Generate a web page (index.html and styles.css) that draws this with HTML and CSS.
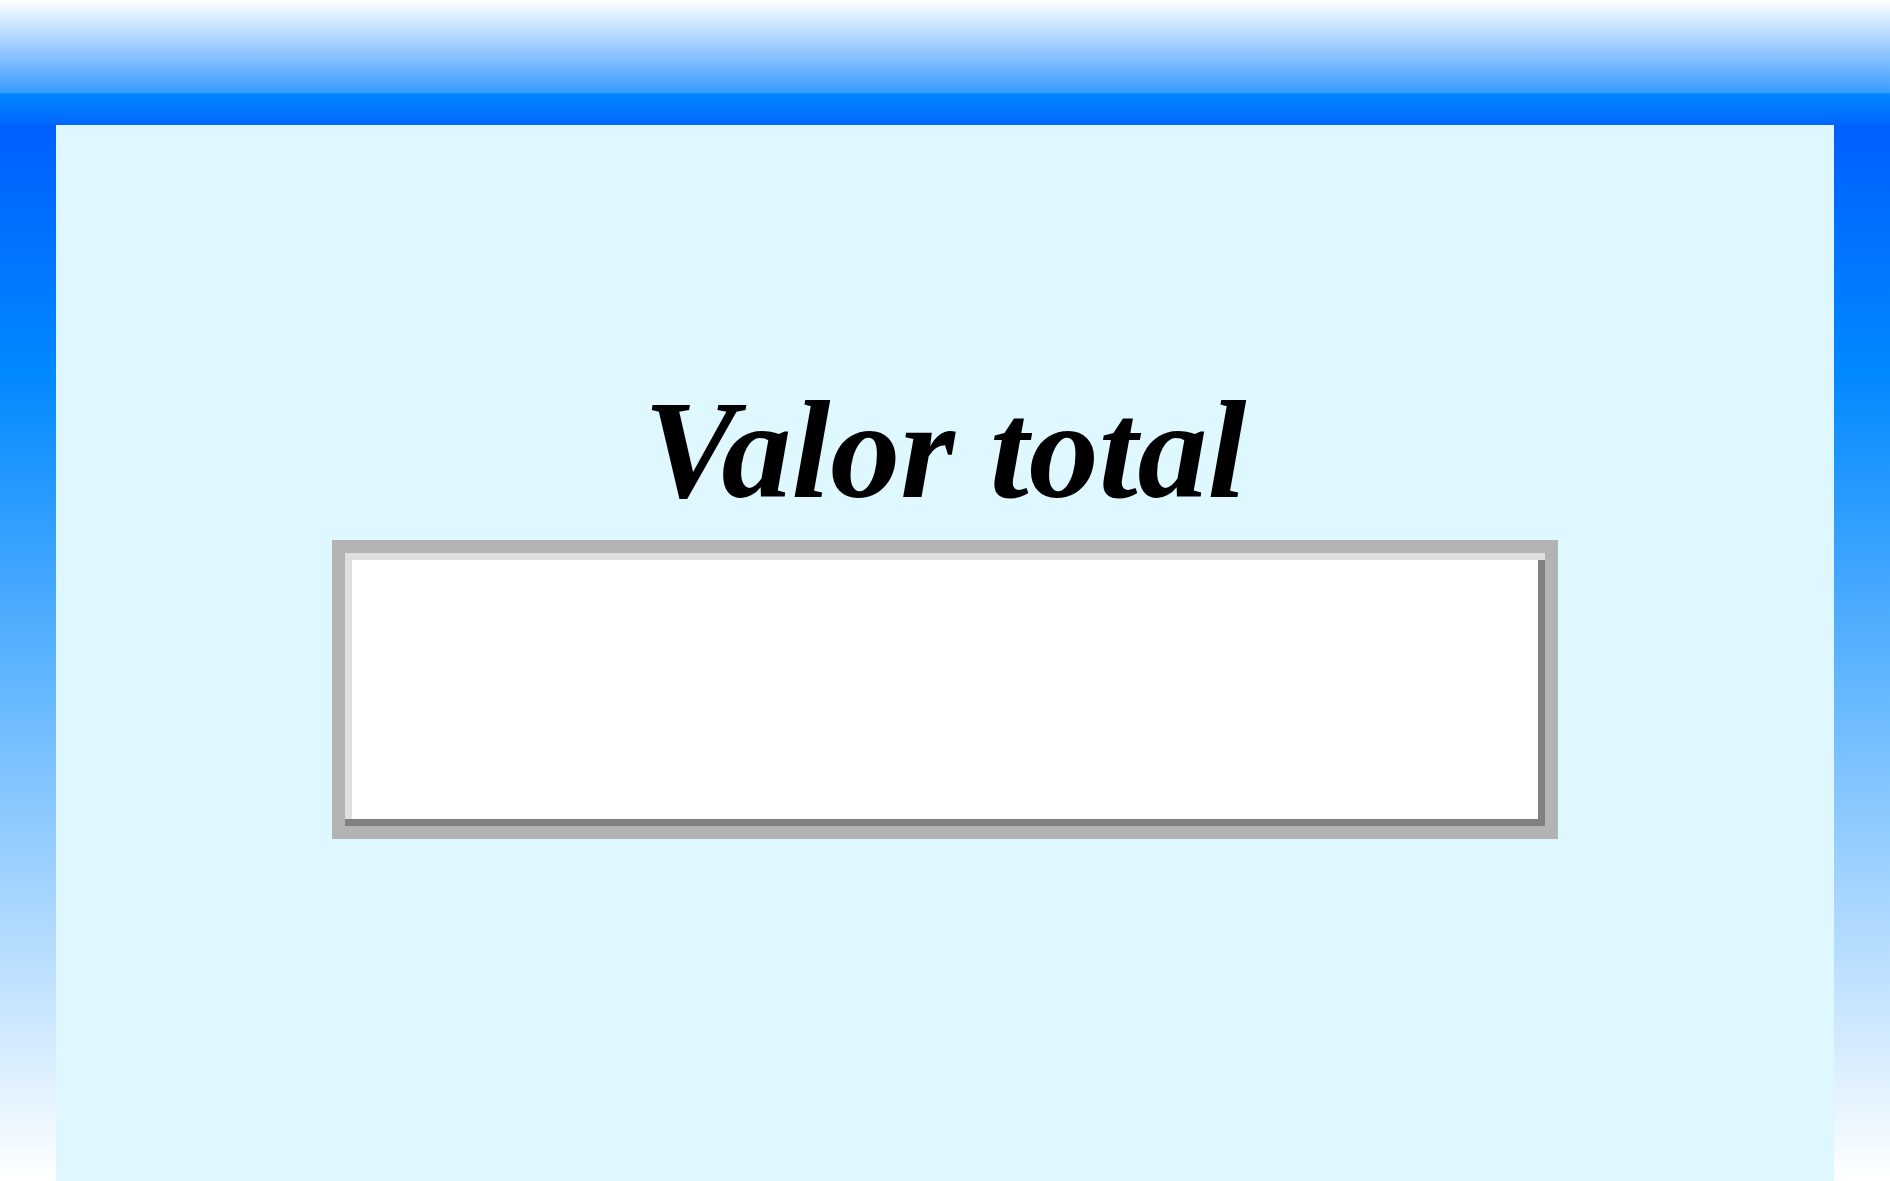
FILE: index.html
```html
<!DOCTYPE html>
<html lang="pt">
<head>
<meta charset="utf-8">
<title>Valor total</title>
<link rel="stylesheet" href="styles.css">
</head>
<body>
<div class="header"></div>
<div class="layout">
  <div class="side"></div>
  <main class="panel">
    <h1 class="title">Valor total</h1>
    <div class="field">
      <div class="field-h">
        <div class="field-v"></div>
      </div>
    </div>
  </main>
  <div class="side"></div>
</div>
</body>
</html>
```
FILE: styles.css
```css
html, body {
  margin: 0;
  padding: 0;
}
body {
  width: 1890px;
  height: 1181px;
  overflow: hidden;
  display: flex;
  flex-direction: column;
}
.header {
  height: 125px;
  flex: none;
  background: linear-gradient(to bottom, #ffffff 0%, #3b9bff 74%, #0088ff 75%, #0066ff 100%);
}
.layout {
  flex: 1;
  display: flex;
}
.side {
  width: 56px;
  flex: none;
  background: linear-gradient(to bottom, #005fff 0%, #0088ff 23%, #ffffff 100%);
}
.panel {
  flex: 1;
  background: #dff7ff;
  display: flex;
  flex-direction: column;
  align-items: center;
  padding-top: 247px;
}
.title {
  margin: 0 0 13px 0;
  font-family: "Liberation Serif", "Times New Roman", serif;
  font-weight: bold;
  font-style: italic;
  font-size: 140px;
  line-height: 155px;
  color: #000;
  text-align: center;
}
.field {
  width: 1226px;
  box-sizing: border-box;
  padding: 13px;
  background: #b3b3b3;
}
.field-h {
  border-top: 7px solid #dfdfdf;
  border-bottom: 7px solid #808080;
}
.field-v {
  height: 259px;
  border-left: 7px solid #dfdfdf;
  border-right: 7px solid #808080;
  background: #ffffff;
}
```
